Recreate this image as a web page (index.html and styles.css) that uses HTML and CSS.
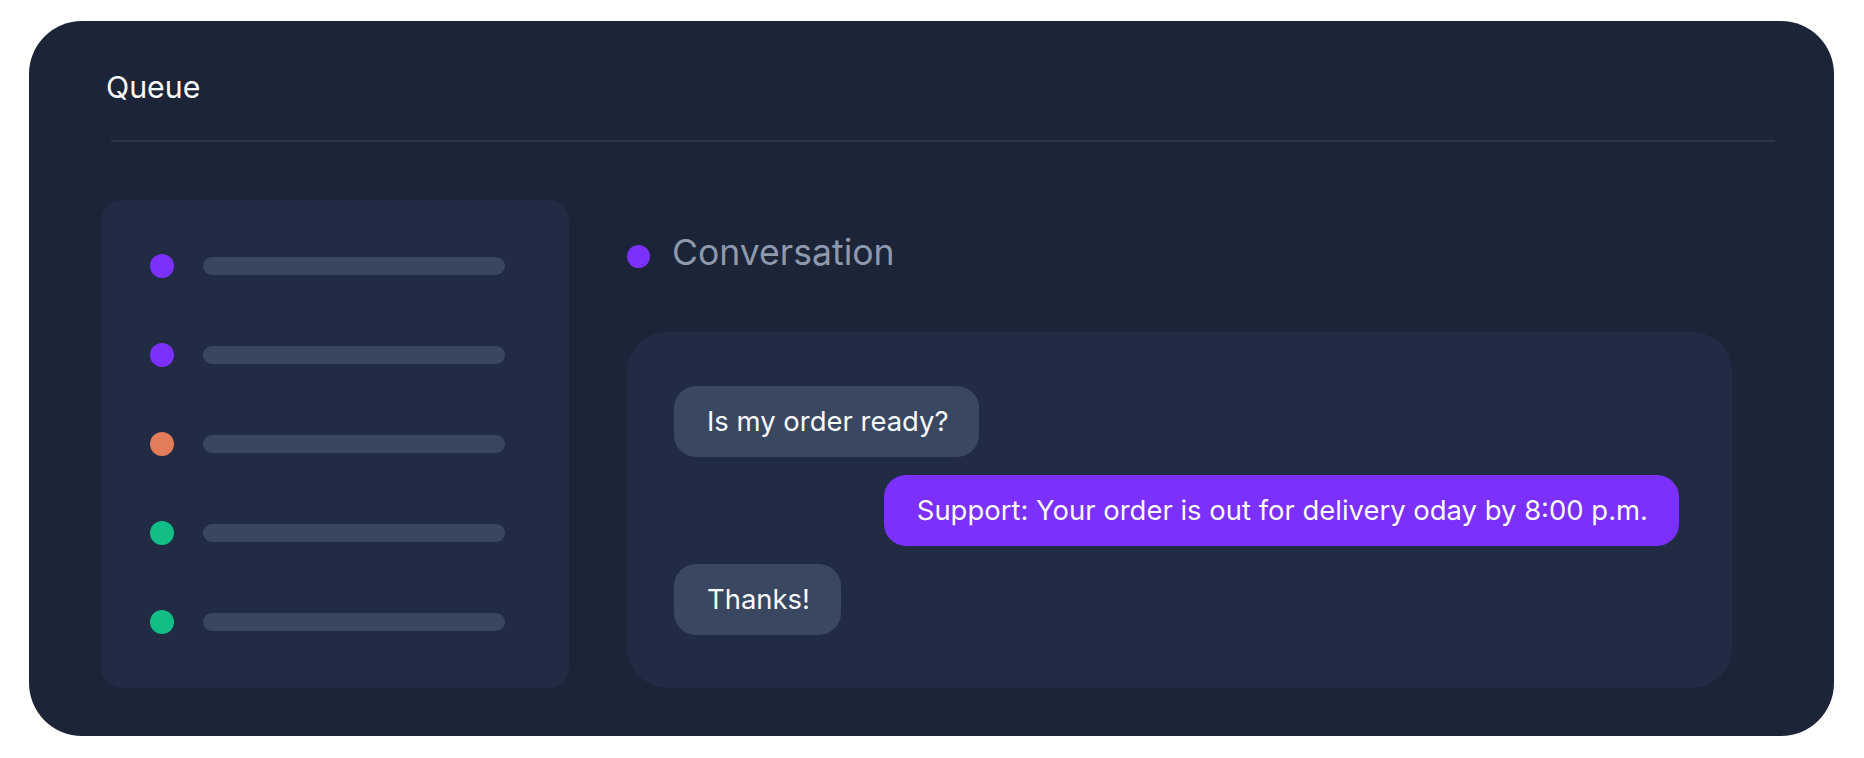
FILE: index.html
```html
<!DOCTYPE html>
<html>

<head>
    <meta charset="UTF-8">
    <meta name="viewport" content="width=device-width,initial-scale=1">
    <link rel="stylesheet" href="styles.css">
    <title>Queue</title>
</head>

<body>
    <div class="frame">
        <div class="frame-title">Queue</div>
        <div class="divider"></div>
        <div class="main">
            <div class="queue-list">
                <div class="queue-item"><span class="dot dot-purple"></span><span class="bar"></span></div>
                <div class="queue-item"><span class="dot dot-purple"></span><span class="bar"></span></div>
                <div class="queue-item"><span class="dot dot-orange"></span><span class="bar"></span></div>
                <div class="queue-item"><span class="dot dot-green"></span><span class="bar"></span></div>
                <div class="queue-item"><span class="dot dot-green"></span><span class="bar"></span></div>
            </div>
            <div class="conversation">
                <div class="conversation-head">
                    <span class="dot dot-purple"></span>
                    <span class="conversation-title">Conversation</span>
                </div>
                <div class="chat">
                    <div class="bubble">Is my order ready?</div>
                    <div class="bubble bubble-support">Support: Your order is out for delivery oday by 8:00 p.m.</div>
                    <div class="bubble">Thanks!</div>
                </div>
            </div>
        </div>
    </div>
</body>

</html>
```

FILE: styles.css
```css
*,
*::before,
*::after {
    box-sizing: border-box;
    padding: 0;
    margin: 0;
}

body {
    background: #fff;
    font-family: Inter, "Noto Sans", sans-serif;
    color: #f8fafc;
}

.frame {
    width: 1805px;
    height: 715px;
    margin: 21px 0 0 29px;
    padding: 48px 59px 48px 72px;
    background: #1c2438;
    border-radius: 53px;
}

.frame-title {
    height: 36px;
    margin-left: 5px;
    font-size: 30.3px;
    line-height: 36px;
}

.divider {
    height: 2px;
    margin: 35px 0 0 10px;
    background: #29354b;
}

.main {
    display: flex;
    gap: 58px;
    margin-top: 58px;
}

.queue-list {
    width: 468px;
    height: 488px;
    padding: 21px 0 22px 49px;
    background: #212b43;
    border-radius: 20px;
}

.queue-item {
    display: flex;
    align-items: center;
    gap: 29px;
    height: 89px;
}

.dot {
    flex: none;
    width: 24px;
    height: 24px;
    border-radius: 50%;
}

.dot-purple {
    background: #7b30fd;
}

.dot-orange {
    background: #e27c5b;
}

.dot-green {
    background: #13bd86;
}

.bar {
    width: 302px;
    height: 18px;
    border-radius: 9px;
    background: #394660;
}

.conversation {
    width: 1105px;
}

.conversation-head {
    display: flex;
    align-items: center;
    gap: 22px;
    height: 106px;
}

.conversation-head>.dot {
    width: 23px;
    height: 23px;
    margin-top: 7px;
}

.conversation-title {
    font-size: 35.6px;
    line-height: 42px;
    color: #8e99ad;
}

.chat {
    display: flex;
    flex-direction: column;
    align-items: flex-start;
    justify-content: center;
    gap: 18px;
    height: 356px;
    margin-top: 26px;
    padding: 0 53px 0 47px;
    background: #212b43;
    border-radius: 40px;
}

.bubble {
    height: 71px;
    padding: 0 31px 0 33px;
    font-size: 27.45px;
    line-height: 71px;
    white-space: nowrap;
    background: #3a4760;
    border-radius: 22px;
}

.bubble-support {
    align-self: flex-end;
    background: #7b30fd;
}
```
